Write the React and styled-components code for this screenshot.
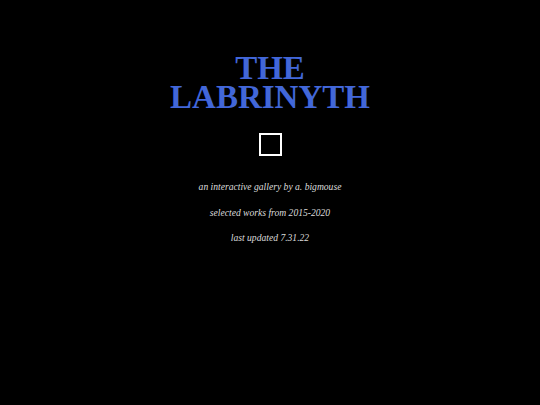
import styled, { createGlobalStyle } from "styled-components";

const Global = createGlobalStyle`
  html, body {
    margin: 0;
    padding: 0;
    background: #000;
  }
  body {
    font-family: "Liberation Serif", "DejaVu Serif", serif;
  }
`;

const Page = styled.main`
  min-height: 405px;
  background: #000;
  display: flex;
  flex-direction: column;
  align-items: center;
  padding-top: 54px;
  box-sizing: border-box;
`;

const Title = styled.h1`
  margin: 0;
  color: #4267d9;
  font-family: "Liberation Serif", serif;
  font-weight: bold;
  font-size: 33px;
  line-height: 29px;
  text-align: center;
`;

const TitleLine = styled.span`
  display: block;
`;

const Box = styled.div`
  width: 19px;
  height: 19px;
  border: 2px solid #fff;
  margin-top: 21px;
`;

const Lines = styled.div`
  display: flex;
  flex-direction: column;
  align-items: center;
  gap: 11px;
  margin-top: 24px;
`;

const Line = styled.p`
  margin: 0;
  color: #dcdcdc;
  font-family: "Liberation Serif", serif;
  font-style: italic;
  font-size: 9.6px;
  line-height: 14.5px;
`;

export default function App() {
  return (
    <>
      <Global />
      <Page>
        <Title>
          <TitleLine>THE</TitleLine>
          <TitleLine>LABRINYTH</TitleLine>
        </Title>
        <Box />
        <Lines>
          <Line>an interactive gallery by a. bigmouse</Line>
          <Line>selected works from 2015-2020</Line>
          <Line>last updated 7.31.22</Line>
        </Lines>
      </Page>
    </>
  );
}
